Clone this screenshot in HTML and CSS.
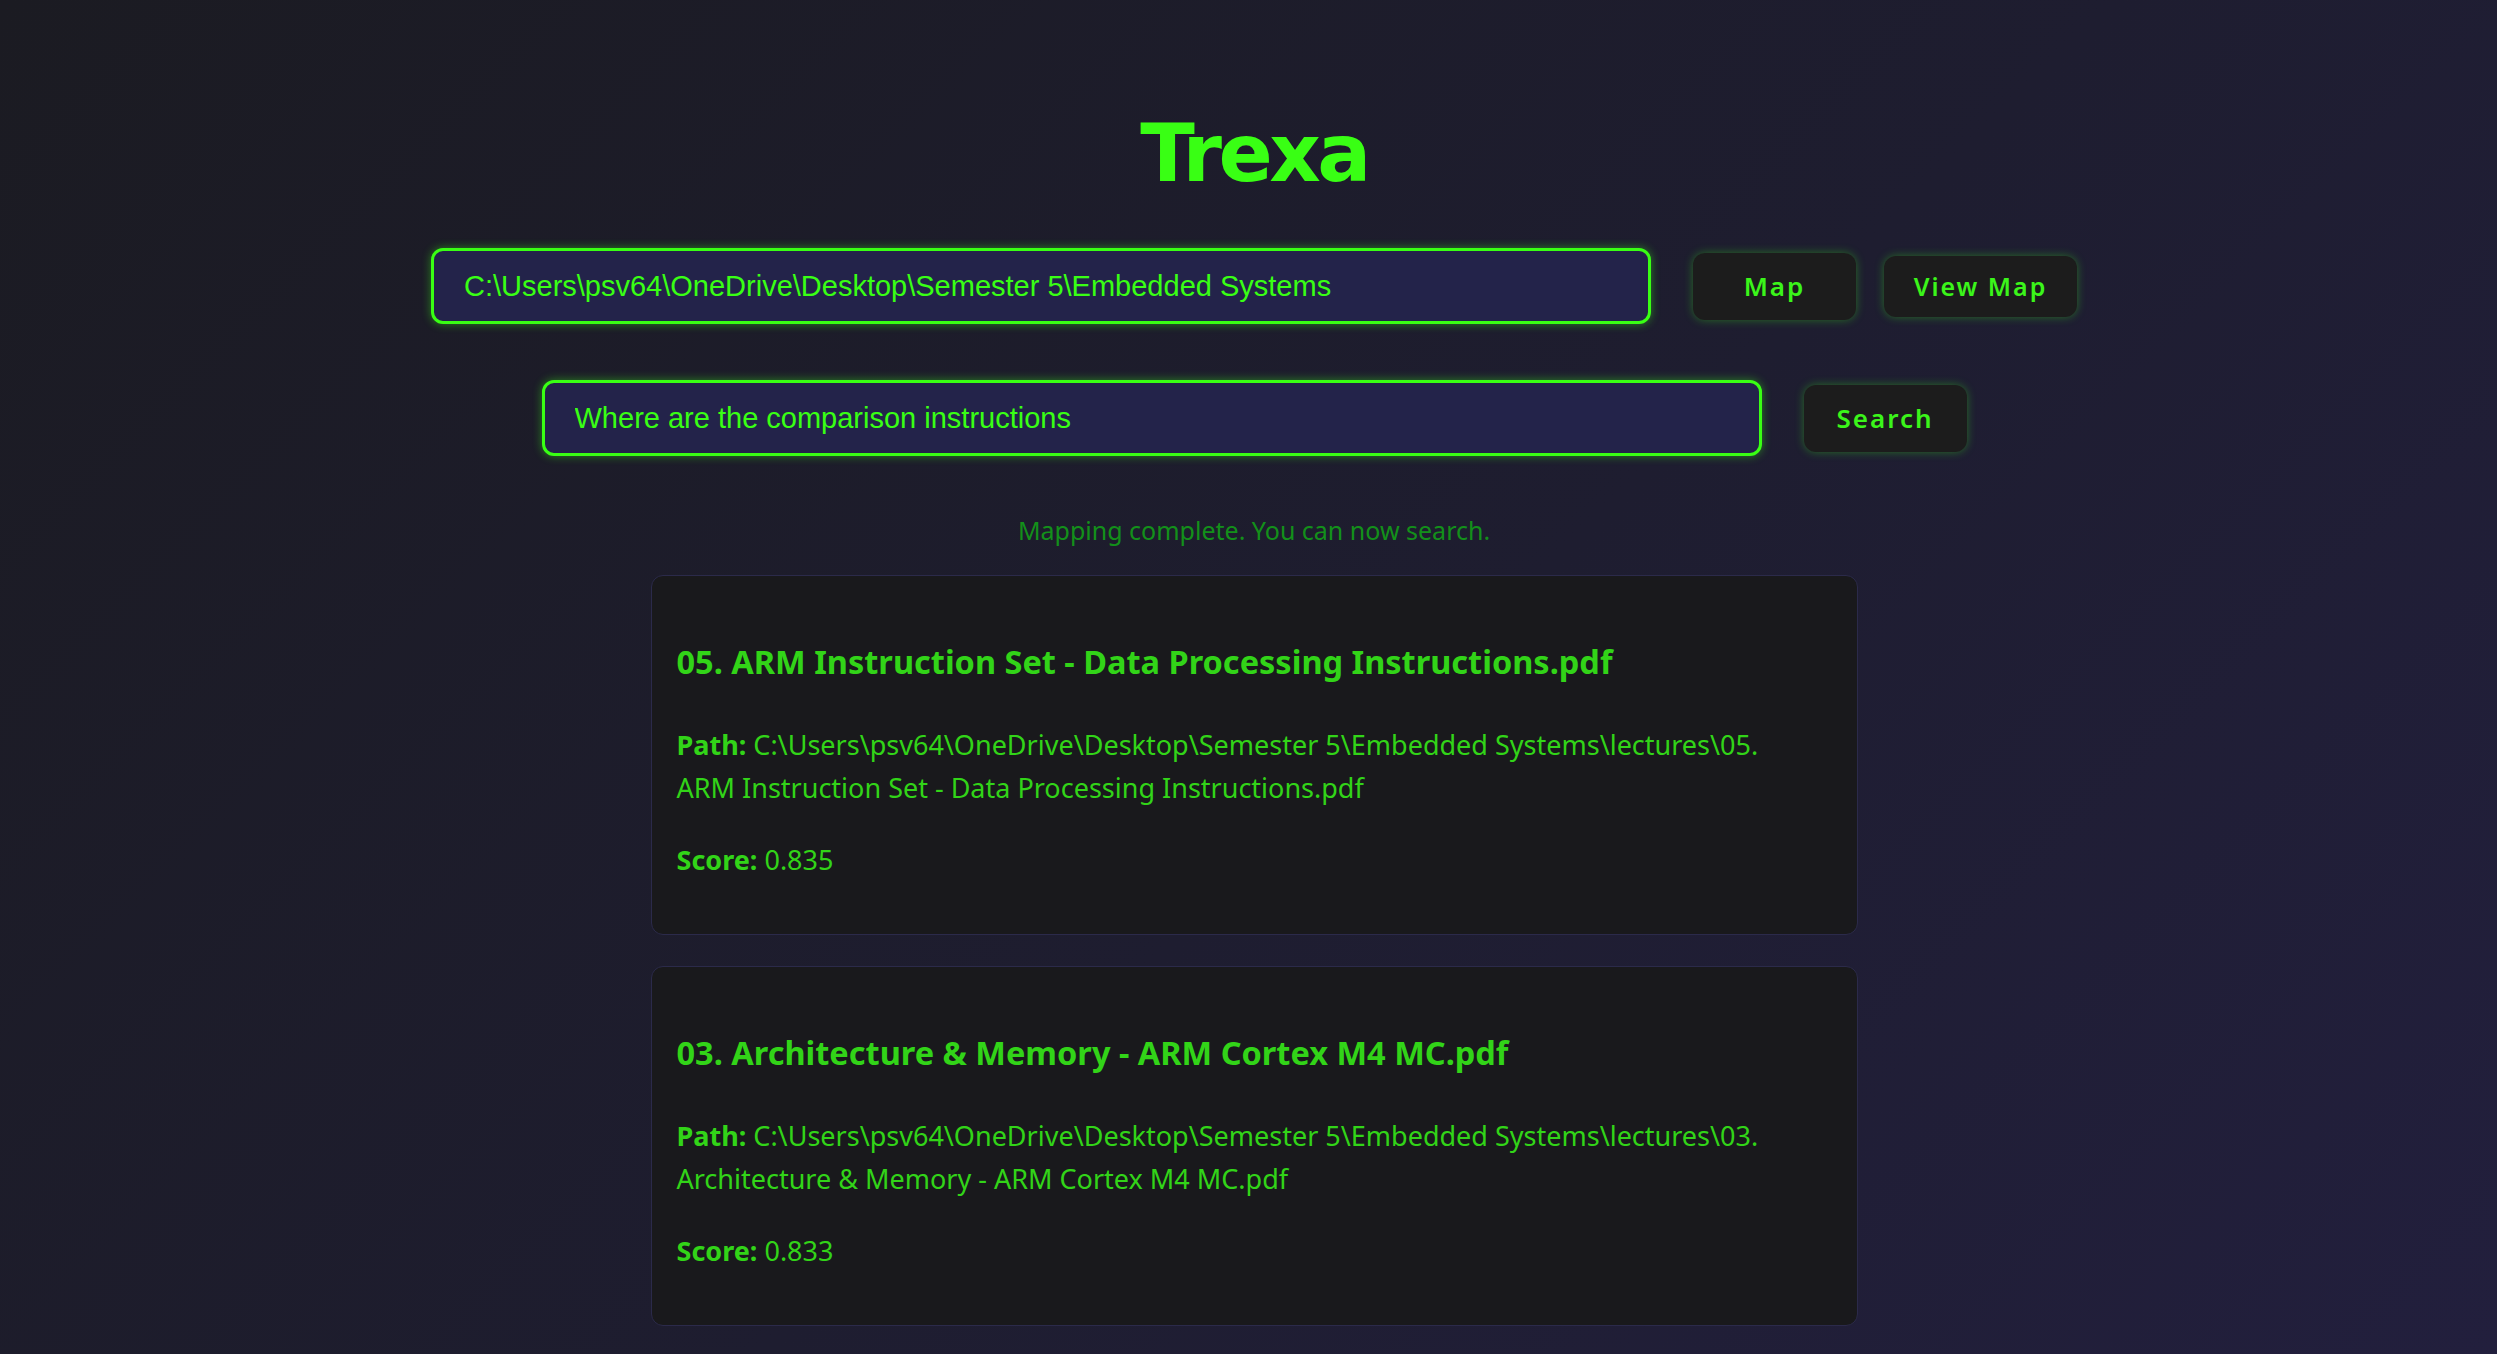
FILE: index.html
```html
<!DOCTYPE html>
<html lang="en">
<head>
<meta charset="utf-8">
<title>Trexa</title>
<link rel="stylesheet" href="styles.css">
</head>
<body>
<main class="page">
  <h1 class="title">Trexa</h1>

  <div class="row row-map">
    <input class="field field-path" type="text" value="C:\Users\psv64\OneDrive\Desktop\Semester 5\Embedded Systems">
    <button class="btn btn-map">Map</button>
    <button class="btn btn-view">View Map</button>
  </div>

  <div class="row row-search">
    <input class="field field-query" type="text" value="Where are the comparison instructions">
    <button class="btn btn-search">Search</button>
  </div>

  <p class="status">Mapping complete. You can now search.</p>

  <section class="results">
    <article class="card">
      <h3 class="card-title">05. ARM Instruction Set - Data Processing Instructions.pdf</h3>
      <p class="card-line"><strong>Path:</strong> C:\Users\psv64\OneDrive\Desktop\Semester 5\Embedded Systems\lectures\05. ARM Instruction Set - Data Processing Instructions.pdf</p>
      <p class="card-line"><strong>Score:</strong> 0.835</p>
    </article>
    <article class="card">
      <h3 class="card-title">03. Architecture &amp; Memory - ARM Cortex M4 MC.pdf</h3>
      <p class="card-line"><strong>Path:</strong> C:\Users\psv64\OneDrive\Desktop\Semester 5\Embedded Systems\lectures\03. Architecture &amp; Memory - ARM Cortex M4 MC.pdf</p>
      <p class="card-line"><strong>Score:</strong> 0.833</p>
    </article>
  </section>
</main>
</body>
</html>
```

FILE: styles.css
```css
* { box-sizing: border-box; }

html, body {
  margin: 0;
  height: 100%;
}

body {
  background: linear-gradient(135deg, #1b1b22 0%, #1e1d30 55%, #221f3d 100%);
  font-family: "Noto Sans", "Open Sans", sans-serif;
  color: #32d418;
  overflow: hidden;
}

.page {
  display: flex;
  flex-direction: column;
  align-items: center;
  padding-left: 11px;
  padding-top: 104px;
}

.title {
  margin: 0;
  font-family: "DejaVu Sans", sans-serif;
  font-weight: 700;
  font-size: 80px;
  line-height: 100px;
  color: #39ff14;
  letter-spacing: -3.5px;
}

.row {
  display: flex;
  align-items: center;
}

.row-map {
  margin-top: 44px;
}

.row-search {
  margin-top: 56px;
}

.field {
  width: 1220px;
  height: 76px;
  padding: 0 30px;
  border: 3px solid #39ff14;
  border-radius: 12px;
  background: #23234a;
  color: #39ff14;
  font-family: "Liberation Sans", Arial, sans-serif;
  font-size: 29px;
  outline: none;
  box-shadow: 0 0 10px rgba(57, 255, 20, 0.45);
}

.btn {
  border: none;
  border-radius: 12px;
  background: #1c1c1c;
  color: #3bf51a;
  font-family: "Noto Sans", "Open Sans", sans-serif;
  font-weight: 600;
  letter-spacing: 2px;
  box-shadow: 0 0 10px rgba(57, 255, 20, 0.35);
  cursor: pointer;
  padding: 0;
}

.btn-map,
.btn-search {
  width: 163px;
  height: 67px;
  font-size: 26px;
  margin-left: 42px;
}

.btn-view {
  width: 193px;
  height: 61px;
  font-size: 25px;
  margin-left: 28px;
}

.status {
  margin: 58px 0 0;
  font-size: 25px;
  line-height: 32px;
  color: #13901a;
}

.results {
  margin-top: 29px;
  display: flex;
  flex-direction: column;
  gap: 31px;
}

.card {
  width: 1207px;
  height: 360px;
  padding: 26px 40px 26px 25px;
  background: #19191c;
  border: 1px solid #2b2a4a;
  border-radius: 12px;
}

.card-title {
  margin: 37px 0 0;
  font-size: 32.5px;
  line-height: 46px;
  font-weight: 700;
  color: #32d418;
}

.card-line {
  margin: 38px 0 0;
  font-size: 27px;
  line-height: 43px;
  color: #32d418;
}

.card-line + .card-line {
  margin-top: 29px;
}

.card-line strong {
  font-weight: 700;
}
```
